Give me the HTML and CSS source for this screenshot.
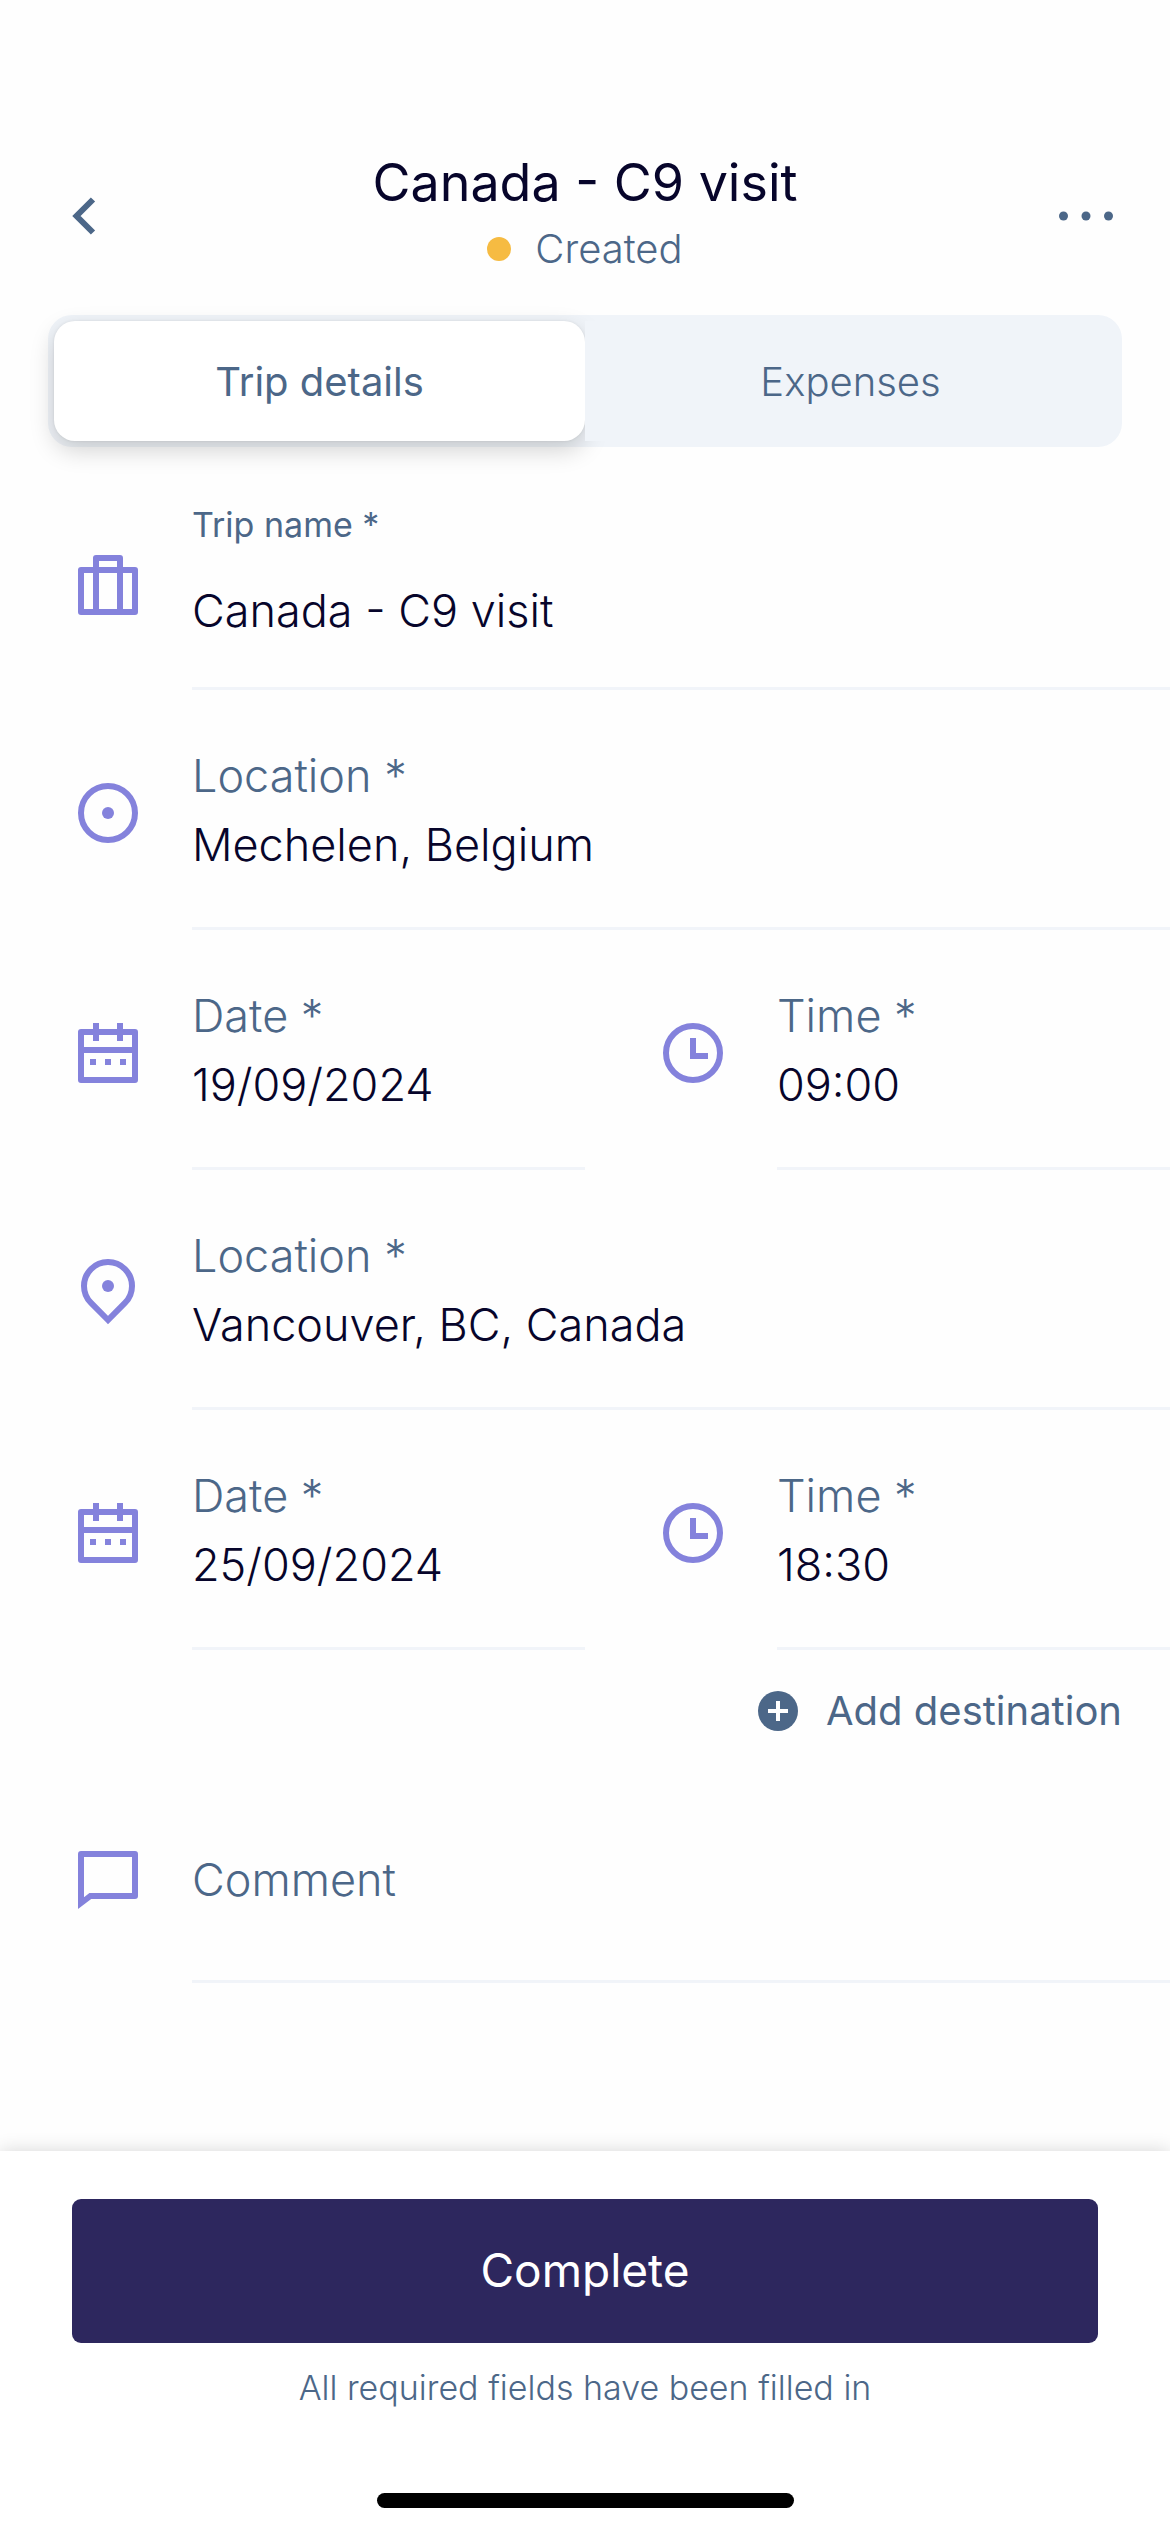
FILE: index.html
```
<!DOCTYPE html>
<html lang="en">
  <head>
    <meta charset="utf-8">
    <meta name="viewport" content="width=device-width, initial-scale=1">
    <title>Canada - C9 visit</title>
    <link rel="stylesheet" href="styles.css">
  </head>
  <body>
    <header class="header">
      <button type="button" class="icon-button" aria-label="Back">
        <svg viewBox="0 0 72 72"><path d="M45 19.500 28.500 36 45 52.500" class="chevron" /></svg>
      </button>
      <div class="heading">
        <h1>Canada - C9 visit</h1>
        <p class="status"><span class="status-dot"></span>Created</p>
      </div>
      <button type="button" class="icon-button" aria-label="More options">
        <svg viewBox="0 0 72 72" class="dots"><circle cx="13.500" cy="36" r="4.500" /><circle cx="36" cy="36" r="4.500" /><circle cx="58.500" cy="36" r="4.500" /></svg>
      </button>
    </header>

    <nav class="tabs" role="tablist">
      <button type="button" class="tab active" role="tab" aria-selected="true">Trip details</button>
      <button type="button" class="tab" role="tab" aria-selected="false">Expenses</button>
    </nav>

    <form id="tripForm" class="trip-form">
      <div class="field field-name">
        <svg class="field-icon" viewBox="0 0 24 24"><rect x="3" y="7" width="18" height="14" /><path d="M8 21V3h8v18" /></svg>
        <div class="field-body">
          <label for="tripName">Trip name *</label>
          <input type="text" id="tripName" value="Canada - C9 visit" required>
        </div>
      </div>

      <div class="field">
        <svg class="field-icon" viewBox="0 0 24 24"><circle cx="12" cy="12" r="9" /><circle cx="12" cy="12" r="2" class="solid" /></svg>
        <div class="field-body">
          <label for="fromLocation">Location *</label>
          <input type="text" id="fromLocation" value="Mechelen, Belgium" required>
        </div>
      </div>

      <div class="field-pair">
        <div class="field">
          <svg class="field-icon" viewBox="0 0 24 24"><path d="M3 5h18v16H3zM3 11h18M8 2v6M16 2v6" /><path d="M6 14h2v2H6zM11 14h2v2h-2zM16 14h2v2h-2z" class="solid" /></svg>
          <div class="field-body">
            <label for="fromDate">Date *</label>
            <input type="text" id="fromDate" value="19/09/2024" required>
          </div>
        </div>
        <div class="field">
          <svg class="field-icon" viewBox="0 0 24 24"><circle cx="12" cy="12" r="9" /><path d="M12 7v6h5" class="hands" /></svg>
          <div class="field-body">
            <label for="fromTime">Time *</label>
            <input type="text" id="fromTime" value="09:00" required>
          </div>
        </div>
      </div>

      <div class="field">
        <svg class="field-icon" viewBox="0 0 24 24"><path d="M12 21 6.340 15.330A8 8 0 1 1 17.660 15.330z" class="pin" /><circle cx="12" cy="9.670" r="2" class="solid" /></svg>
        <div class="field-body">
          <label for="toLocation">Location *</label>
          <input type="text" id="toLocation" value="Vancouver, BC, Canada" required>
        </div>
      </div>

      <div class="field-pair">
        <div class="field">
          <svg class="field-icon" viewBox="0 0 24 24"><path d="M3 5h18v16H3zM3 11h18M8 2v6M16 2v6" /><path d="M6 14h2v2H6zM11 14h2v2h-2zM16 14h2v2h-2z" class="solid" /></svg>
          <div class="field-body">
            <label for="toDate">Date *</label>
            <input type="text" id="toDate" value="25/09/2024" required>
          </div>
        </div>
        <div class="field">
          <svg class="field-icon" viewBox="0 0 24 24"><circle cx="12" cy="12" r="9" /><path d="M12 7v6h5" class="hands" /></svg>
          <div class="field-body">
            <label for="toTime">Time *</label>
            <input type="text" id="toTime" value="18:30" required>
          </div>
        </div>
      </div>

      <button type="button" class="add-destination">
        <svg viewBox="0 0 40 40"><circle cx="20" cy="20" r="20" /><path d="M20 10v20M10 20h20" /></svg>
        Add destination
      </button>

      <div class="field field-comment">
        <svg class="field-icon" viewBox="0 0 24 24"><path d="M2 21.300V3a1 1 0 0 1 1-1h18a1 1 0 0 1 1 1v14a1 1 0 0 1-1 1H6.400zM4 17.400 5.800 16H20V4H4z" fill-rule="evenodd" class="solid" /></svg>
        <div class="field-body">
          <textarea id="comment" rows="1" placeholder="Comment" aria-label="Comment"></textarea>
        </div>
      </div>
    </form>

    <footer class="footer">
      <button type="submit" form="tripForm" class="complete">Complete</button>
      <p class="note">All required fields have been filled in</p>
      <div class="home-indicator"></div>
    </footer>
  </body>
</html>
```
FILE: styles.css
```
* {
  box-sizing: border-box;
}
body {
  display: flex;
  flex-direction: column;
  min-height: 100vh;
  margin: 0;
  background-color: #fefefe;
  color: #07052b;
  font-family: Inter, "Liberation Sans", sans-serif;
  font-size: 45px;
  font-weight: 300;
}
h1,
p {
  margin: 0;
}
button,
input,
textarea {
  margin: 0;
  padding: 0;
  border: none;
  background: none;
  color: inherit;
  font: inherit;
}
button {
  cursor: pointer;
}
svg {
  display: block;
}

/* Header */
.header {
  display: flex;
  align-items: center;
  justify-content: space-between;
  padding: 150px 48px 0;
  color: #4c6788;
}
.icon-button svg {
  width: 72px;
  height: 72px;
}
.chevron {
  fill: none;
  stroke: currentColor;
  stroke-width: 6;
}
.dots {
  fill: currentColor;
}
.heading {
  text-align: center;
}
h1 {
  color: #07052b;
  font-size: 52px;
  font-weight: 400;
  line-height: 66px;
}
.status {
  display: flex;
  align-items: center;
  justify-content: center;
  gap: 24px;
  font-size: 40px;
  line-height: 66px;
}
.status-dot {
  width: 24px;
  height: 24px;
  border-radius: 50%;
  background-color: #f6bb42;
}

/* Tabs */
.tabs {
  display: flex;
  margin: 33px 48px 3px;
  padding: 6px;
  border-radius: 24px;
  background-color: #f0f4f9;
}
.tab {
  flex: 1;
  height: 120px;
  border-radius: 21px;
  background-color: #f0f4f9;
  color: #4c6788;
  font-size: 40px;
}
.tab.active {
  background-color: #ffffff;
  box-shadow: 0 0 3px rgba(0, 0, 0, 0.08), 0 9px 24px rgba(0, 0, 0, 0.18);
  font-weight: 400;
}
.tab:not(.active) {
  border-radius: 0 21px 21px 0;
}

/* Form fields */
.field {
  display: flex;
  flex: 1;
  min-width: 0;
  padding-left: 72px;
  gap: 48px;
}
.field-pair {
  display: flex;
}
.field-icon {
  flex: none;
  width: 72px;
  height: 72px;
  margin-top: 87px;
  fill: none;
  stroke: #8482dc;
  stroke-width: 2;
  stroke-linejoin: round;
}
.field-icon .solid {
  fill: #8482dc;
  stroke: none;
}
.field-icon .pin,
.field-icon .hands {
  stroke-linejoin: miter;
}
.field-body {
  flex: 1;
  min-width: 0;
  padding: 51px 0 48px;
  border-bottom: 3px solid #f1f4f9;
}
.field-body label {
  display: block;
  color: #4c6788;
  line-height: 69px;
}
.field-body input,
.field-body textarea {
  display: block;
  width: 100%;
  height: 69px;
  line-height: 69px;
  outline: none;
  resize: none;
}
.field-body textarea::placeholder {
  color: #4c6788;
  opacity: 1;
}
.field-name .field-icon {
  margin-top: 99px;
}
.field-name .field-body {
  padding-bottom: 42px;
}
.field-name label {
  margin-bottom: 27px;
  font-size: 34px;
  font-weight: 400;
  line-height: 48px;
}
.add-destination {
  display: flex;
  align-items: center;
  gap: 28px;
  margin: 30px 48px 0 auto;
  color: #4c6788;
  font-size: 40px;
  font-weight: 400;
  line-height: 62px;
}
.add-destination svg {
  width: 40px;
  height: 40px;
  fill: #4c6788;
  stroke: #ffffff;
}
.add-destination circle {
  stroke: none;
}
.add-destination path {
  stroke-width: 4;
}
.field-comment {
  margin-top: 52px;
}
.field-comment .field-icon {
  margin-top: 51px;
}
.field-comment .field-body {
  padding-bottom: 66px;
}

/* Footer */
.footer {
  margin-top: auto;
  padding: 48px 72px 24px;
  background-color: #ffffff;
  box-shadow: 0 0 18px rgba(0, 0, 0, 0.16);
  text-align: center;
}
.complete {
  width: 100%;
  height: 144px;
  padding-bottom: 3px;
  border-radius: 9px;
  background-color: #2d275e;
  color: #ffffff;
  font-size: 46px;
  font-weight: 400;
}
.note {
  margin-top: 21px;
  color: #4c6788;
  font-size: 34px;
  line-height: 48px;
}
.home-indicator {
  width: 417px;
  height: 15px;
  margin: 81px auto 0;
  border-radius: 8px;
  background-color: #000000;
}
```
